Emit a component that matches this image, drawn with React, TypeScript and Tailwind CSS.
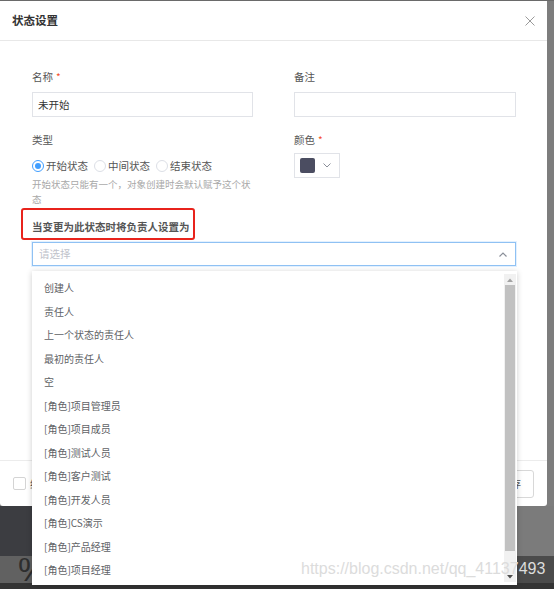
const items = [
  "创建人",
  "责任人",
  "上一个状态的责任人",
  "最初的责任人",
  "空",
  "[角色]项目管理员",
  "[角色]项目成员",
  "[角色]测试人员",
  "[角色]客户测试",
  "[角色]开发人员",
  "[角色]CS演示",
  "[角色]产品经理",
  "[角色]项目经理",
];

function Radio({ label, checked }: { label: string; checked?: boolean }) {
  return (
    <div className="flex items-center gap-[2px]">
      {checked ? (
        <span className="w-[12px] h-[12px] rounded-full border border-[#409eff] flex items-center justify-center">
          <span className="w-[6px] h-[6px] rounded-full bg-[#409eff]" />
        </span>
      ) : (
        <span className="w-[12px] h-[12px] rounded-full border border-[#dcdfe6]" />
      )}
      <span className="text-[10.5px] leading-[14px] text-[#555] mr-[5px]">{label}</span>
    </div>
  );
}

function Label({ text, required }: { text: string; required?: boolean }) {
  return (
    <div className="h-[14px] flex items-center text-[10.5px] leading-[14px] text-[#555]">
      {text}
      {required && <span className="ml-[3px] text-[#f5502a] text-[10px] leading-none">*</span>}
    </div>
  );
}

export default function App() {
  return (
    <div className="w-[554px] h-[589px] relative overflow-hidden bg-[#7d7d7d] font-['Noto_Sans_CJK_SC',sans-serif]">
      <div className="flex flex-col">
        <div className="h-[1px] bg-[#6a6a6a]" />
        <div className="w-[547px] h-[505px] bg-white rounded-b-[3px] flex flex-col">
          <div className="h-[39px] border-b border-[#e8e8e8] box-content flex items-center justify-between pl-[12px] pr-[12px]">
            <span className="text-[11.5px] font-bold text-[#333]">状态设置</span>
            <svg width="10" height="10" viewBox="0 0 10 10">
              <path d="M0.5 0.5 L9.5 9.5 M9.5 0.5 L0.5 9.5" stroke="#9a9a9a" strokeWidth="1" fill="none" />
            </svg>
          </div>

          <div className="h-[419px] pl-[32px] pr-[31px] pt-[29px] flex flex-col">
            <div className="grid grid-cols-[221px_222px] gap-x-[41px]">
              <div className="flex flex-col">
                <Label text="名称" required />
                <div className="mt-[8px] h-[25px] border border-[#e1e3e8] flex items-center pl-[5px] text-[10.5px] text-[#333]">
                  未开始
                </div>
                <div className="mt-[16px]">
                  <Label text="类型" />
                </div>
                <div className="mt-[12px] h-[14px] flex items-center gap-[1px]">
                  <Radio label="开始状态" checked />
                  <Radio label="中间状态" />
                  <Radio label="结束状态" />
                </div>
                <div className="mt-[4px] text-[9.5px] leading-[15px] text-[#a8a8a8]">
                  开始状态只能有一个，对象创建时会默认赋予这个状态
                </div>
              </div>
              <div className="flex flex-col">
                <Label text="备注" />
                <div className="mt-[8px] h-[25px] border border-[#e1e3e8]" />
                <div className="mt-[16px]">
                  <Label text="颜色" required />
                </div>
                <div className="mt-[6px] w-[46px] h-[25px] border border-[#e1e3e8] flex items-center pl-[5px] gap-[8px]">
                  <span className="w-[15px] h-[15px] rounded-[2px] bg-[#4b4d61]" />
                  <svg width="8" height="5" viewBox="0 0 8 5">
                    <path d="M0.5 0.5 L4 4 L7.5 0.5" stroke="#8a8f99" strokeWidth="1" fill="none" />
                  </svg>
                </div>
              </div>
            </div>

            <div className="mt-[13px] relative">
              <div className="h-[14px] flex items-center text-[10.5px] font-bold text-[#555]">
                当变更为此状态时将负责人设置为
              </div>
              <div className="absolute left-[-11px] top-[-12px] w-[174px] h-[32px] border-2 border-[#e8231c] rounded-[3px]" />
            </div>
            <div className="mt-[8px] h-[24px] border border-[#8fc1f3] shadow-[0_0_0_1px_rgba(64,158,255,0.15)] flex items-center justify-between pl-[6px] pr-[8px]">
              <span className="text-[10.5px] text-[#bfc3cb]">请选择</span>
              <svg width="8" height="5" viewBox="0 0 8 5">
                <path d="M0.5 4.5 L4 1 L7.5 4.5" stroke="#8a8f99" strokeWidth="1.2" fill="none" />
              </svg>
            </div>
          </div>

          <div className="h-[45px] border-t border-[#ececec] box-content flex items-center justify-between pl-[13px] pr-[13px]">
            <div className="flex items-center gap-[4px]">
              <span className="w-[13px] h-[13px] border border-[#d4d4d4] rounded-[2px] bg-white" />
              <span className="text-[10.5px] text-[#555]">继续</span>
            </div>
            <div className="flex items-center gap-[8px]">
              <span className="h-[28px] px-[12px] border border-[#d8d8d8] rounded-[3px] flex items-center text-[10.5px] text-[#555]">
                取消
              </span>
              <span className="h-[28px] px-[12px] border border-[#d8d8d8] rounded-[3px] flex items-center text-[10.5px] text-[#555]">
                保存
              </span>
            </div>
          </div>
        </div>

        <div className="h-[50px] flex">
          <div className="w-[400px] bg-[#3c3d41]" />
          <div className="flex-1 bg-[#7b7b7b]" />
        </div>
        <div className="h-[27px] flex">
          <div className="w-[300px] bg-[#616161] overflow-hidden pl-[18px]">
            <span className="block text-[34px] leading-[26px] text-[#2e2e2e] font-['Liberation_Sans',sans-serif]">%</span>
          </div>
          <div className="flex-1 bg-[#4b4b4b]" />
        </div>
        <div className="h-[6px] bg-[#343434]" />
      </div>

      <div className="absolute left-[32px] top-[271px] w-[485px] h-[314px] bg-white shadow-[0_1px_6px_rgba(0,0,0,0.2)] flex">
        <div className="flex-1 pt-[5px]">
          {items.map((it) => (
            <div key={it} className="h-[23.5px] flex items-center pl-[12px] text-[10px] text-[#606266]">
              {it}
            </div>
          ))}
        </div>
        <div className="w-[12px] my-[3px] mr-[1px] bg-[#f1f1f1] flex flex-col">
          <div className="h-[11px] flex items-center justify-center">
            <svg width="6" height="4" viewBox="0 0 6 4">
              <path d="M0 4 L3 0.5 L6 4 Z" fill="#a3a3a3" />
            </svg>
          </div>
          <div className="h-[266px] bg-[#c1c1c1] mx-[1px]" />
          <div className="flex-1" />
          <div className="h-[11px] flex items-center justify-center">
            <svg width="6" height="4" viewBox="0 0 6 4">
              <path d="M0 0 L3 3.5 L6 0 Z" fill="#505050" />
            </svg>
          </div>
        </div>
      </div>

      <div className="absolute left-[301px] top-[559px] text-[16px] leading-[20px] text-[#dcdcdc] font-['Liberation_Sans',sans-serif] whitespace-nowrap">
        https://blog.csdn.net/qq_41137493
      </div>
    </div>
  );
}
